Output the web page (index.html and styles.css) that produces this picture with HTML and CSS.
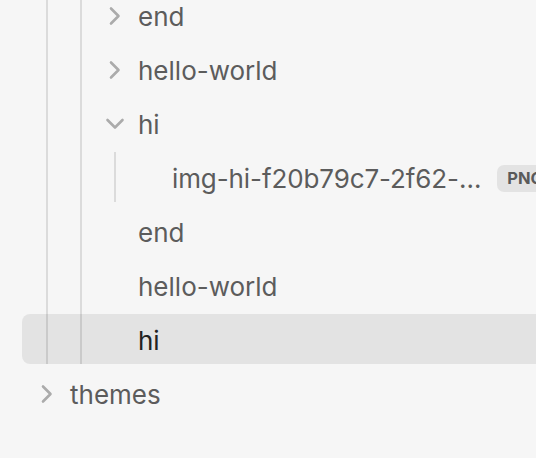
FILE: index.html
```html
<!DOCTYPE html>
<html lang="en">
<head>
<meta charset="utf-8">
<title>Files</title>
<link rel="stylesheet" href="styles.css">
</head>
<body>
<div class="tree">
  <div class="children c1">
    <div class="children c2">
      <div class="row d2">
        <span class="chev closed"><svg viewBox="0 0 20 20"><path d="M2.5 6 L10 13.5 L17.5 6"/></svg></span>
        <span class="name">end</span>
      </div>
      <div class="row d2">
        <span class="chev closed"><svg viewBox="0 0 20 20"><path d="M2.5 6 L10 13.5 L17.5 6"/></svg></span>
        <span class="name">hello-world</span>
      </div>
      <div class="row d2">
        <span class="chev"><svg viewBox="0 0 20 20"><path d="M2.5 6 L10 13.5 L17.5 6"/></svg></span>
        <span class="name">hi</span>
      </div>
      <div class="children c3">
        <div class="row d3">
          <span class="chev"></span>
          <span class="name trunc">img-hi-f20b79c7-2f62-…</span>
          <span class="tag">PNG</span>
        </div>
      </div>
      <div class="row d2">
        <span class="chev"></span>
        <span class="name">end</span>
      </div>
      <div class="row d2">
        <span class="chev"></span>
        <span class="name">hello-world</span>
      </div>
      <div class="row d2 active">
        <span class="chev"></span>
        <span class="name">hi</span>
      </div>
    </div>
  </div>
  <div class="row d0">
    <span class="chev closed"><svg viewBox="0 0 20 20"><path d="M2.5 6 L10 13.5 L17.5 6"/></svg></span>
    <span class="name">themes</span>
  </div>
</div>
</body>
</html>
```

FILE: styles.css
```css
html, body {
  margin: 0;
  padding: 0;
  overflow: hidden;
  background: #f6f6f6;
}

body {
  font-family: Inter, "Noto Sans", sans-serif;
  font-size: 26px;
  color: #5c5c5c;
}

.tree {
  width: 620px;
  margin-top: -10px;
  padding-left: 22px;
  display: flex;
  flex-direction: column;
  gap: 4px;
}

.children {
  display: flex;
  flex-direction: column;
  gap: 4px;
  border-left: 2px solid rgba(0, 0, 0, 0.11);
}

.c1 { margin-left: 24px; }
.c2 { margin-left: 32px; }
.c3 { margin-left: 32px; }

.row {
  box-sizing: border-box;
  display: flex;
  align-items: center;
  height: 50px;
  padding-top: 2px;
  border-radius: 8px;
  white-space: nowrap;
}

.d0 { padding-left: 15px; }
.d2 { margin-left: -60px; padding-left: 83px; }
.d3 { margin-left: -94px; padding-left: 117px; }

.chev {
  flex: none;
  width: 20px;
  height: 20px;
  margin-right: 13px;
  display: flex;
  align-items: center;
  justify-content: center;
}

.chev svg {
  width: 20px;
  height: 20px;
  fill: none;
  stroke: #ababab;
  stroke-width: 2.6;
  stroke-linecap: round;
  stroke-linejoin: round;
}

.chev.closed svg {
  transform: rotate(-90deg);
}

.name {
  line-height: 1.3;
  padding-top: 2px;
}

.trunc {
  letter-spacing: -0.1px;
}

.tag {
  flex: none;
  margin-left: 16px;
  height: 27px;
  padding: 0 10px;
  border-radius: 7px;
  background: rgba(0, 0, 0, 0.075);
  font-size: 16.5px;
  font-weight: 700;
  color: #5a5a5a;
  display: flex;
  align-items: center;
}

.active {
  background: rgba(0, 0, 0, 0.075);
  color: #222222;
}
```
